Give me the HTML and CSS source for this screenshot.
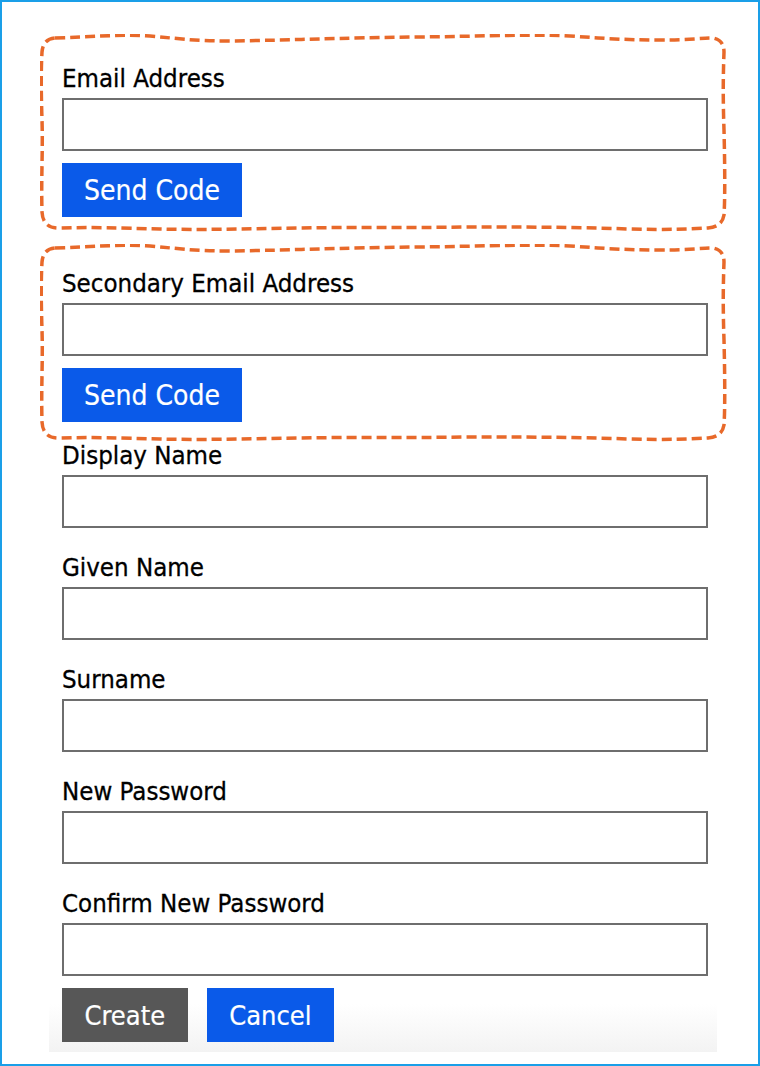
FILE: index.html
```html
<!DOCTYPE html>
<html lang="en">
<head>
<meta charset="utf-8">
<title>Sign up</title>
<link rel="stylesheet" href="styles.css">
</head>
<body>
<div class="frame">
  <form class="form">
    <div class="group group-first">
      <svg class="scribble scribble-first" viewBox="40 34 690 200" width="690" height="200" aria-hidden="true">
        <path d="M55 38 C90 37 120 34 150 36 C175 38 190 41 230 41 C300 40 330 38 420 37 C500 36 530 34 570 36 C600 38 620 40 660 40 C690 40 700 38 713 38 Q724 40 724 52 C723 80 723 100 724 130 C725 170 725 200 724 215 Q722 227 708 228 C690 229 670 230 630 229 C570 227 520 227 470 227 C400 228 350 227 300 228 C240 229 200 230 160 229 C120 228 90 227 60 228 Q43 229 42 212 C41 180 43 150 42 120 C41 90 41 70 42 52 Q43 39 55 38 Z"/>
      </svg>
      <label class="label">Email Address</label>
      <input class="input" type="text">
      <button type="button" class="btn btn-blue">Send Code</button>
    </div>
    <div class="group group-second">
      <svg class="scribble scribble-second" viewBox="40 34 690 200" width="690" height="200" aria-hidden="true">
        <path d="M55 38 C90 37 120 34 150 36 C175 38 190 41 230 41 C300 40 330 38 420 37 C500 36 530 34 570 36 C600 38 620 40 660 40 C690 40 700 38 713 38 Q724 40 724 52 C723 80 723 100 724 130 C725 170 725 200 724 215 Q722 227 708 228 C690 229 670 230 630 229 C570 227 520 227 470 227 C400 228 350 227 300 228 C240 229 200 230 160 229 C120 228 90 227 60 228 Q43 229 42 212 C41 180 43 150 42 120 C41 90 41 70 42 52 Q43 39 55 38 Z"/>
      </svg>
      <label class="label">Secondary Email Address</label>
      <input class="input" type="text">
      <button type="button" class="btn btn-blue">Send Code</button>
    </div>
    <div class="field">
      <label class="label">Display Name</label>
      <input class="input" type="text">
    </div>
    <div class="field">
      <label class="label">Given Name</label>
      <input class="input" type="text">
    </div>
    <div class="field">
      <label class="label">Surname</label>
      <input class="input" type="text">
    </div>
    <div class="field">
      <label class="label">New Password</label>
      <input class="input" type="password">
    </div>
    <div class="field field-last">
      <label class="label">Confirm New Password</label>
      <input class="input" type="password">
    </div>
    <div class="actions">
      <button type="button" class="btn btn-gray">Create</button>
      <button type="button" class="btn btn-blue">Cancel</button>
    </div>
  </form>
</div>
</body>
</html>
```

FILE: styles.css
```css
* { box-sizing: border-box; }
html, body { margin: 0; padding: 0; background: #fff; }
.frame {
  width: 760px;
  height: 1066px;
  border: 2px solid #1a9fe8;
  overflow: hidden;
  font-family: "DejaVu Sans Condensed", "DejaVu Sans", sans-serif;
  color: #000;
}
.form {
  display: flex;
  flex-direction: column;
  padding: 59px 0 0 60px;
}
.group {
  position: relative;
  display: flex;
  flex-direction: column;
  align-items: flex-start;
}
.group-first { margin-bottom: 49px; }
.group-second { margin-bottom: 16px; }
.scribble {
  position: absolute;
  left: -22px;
  fill: none;
  stroke: #e8692a;
  stroke-width: 3.5;
  stroke-dasharray: 10 5;
  pointer-events: none;
}
.scribble-first { top: -27px; }
.scribble-second { top: -22px; }
.label {
  display: block;
  font-size: 25.6px;
  line-height: 34px;
  height: 30px;
  margin-bottom: 7px;
  -webkit-text-stroke: 0.3px #000;
}
.input {
  display: block;
  width: 646px;
  height: 53px;
  margin: 0;
  border: 2px solid #6e6e6e;
  border-radius: 0;
  background: #fff;
  font: inherit;
}
.group .input { margin-bottom: 12px; }
.field { display: flex; flex-direction: column; margin-bottom: 22px; }
.field-last { margin-bottom: 12px; }
.btn {
  height: 54px;
  padding: 0 22px;
  border: 0;
  border-radius: 0;
  font-family: "DejaVu Sans Condensed", "DejaVu Sans", sans-serif;
  font-size: 28px;
  color: #fff;
  line-height: 56px;
  -webkit-text-stroke: 0.2px #fff;
}
.btn-blue { background: #0a5ae9; }
.btn-gray { background: #575757; }
.actions {
  display: flex;
  gap: 19px;
  margin-left: -13px;
  padding-left: 13px;
  width: 668px;
  height: 64px;
  background: linear-gradient(to bottom, #fff 0, #fff 25%, #f3f3f3 100%);
}
.actions .btn {
  align-self: flex-start;
  font-size: 27px;
  padding: 0 22.5px;
}
```
